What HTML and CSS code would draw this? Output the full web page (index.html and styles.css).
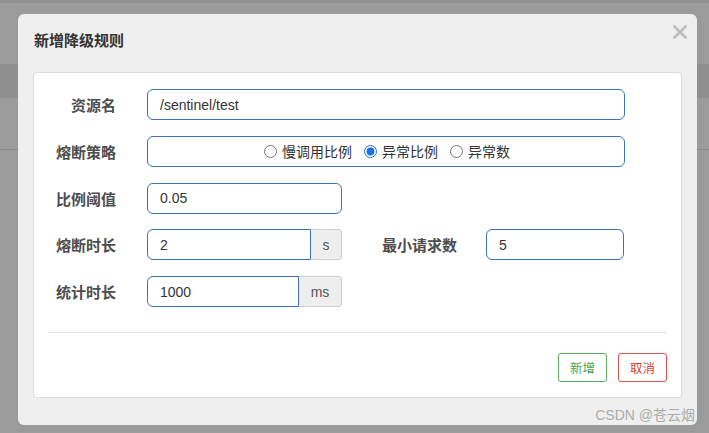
FILE: index.html
```html
<!DOCTYPE html>
<html lang="zh">
<head>
<meta charset="utf-8">
<title>新增降级规则</title>
<link rel="stylesheet" href="styles.css">
</head>
<body>
<div class="page">
  <div class="bg-top"></div>
  <div class="bg-band"></div>
  <div class="bg-line"></div>
</div>

<div class="modal">
  <div class="modal-header">
    <h4 class="modal-title">新增降级规则</h4>
    <span class="close">
      <svg width="14" height="14" viewBox="0 0 14 14"><path d="M1.5 1.5 L12.5 12.5 M12.5 1.5 L1.5 12.5" stroke="#bdbdbd" stroke-width="2.6" stroke-linecap="round"/></svg>
    </span>
  </div>
  <div class="card">
    <div class="form">
      <div class="row">
        <label class="label">资源名</label>
        <div class="control w-full"><input class="input" type="text" value="/sentinel/test"></div>
      </div>
      <div class="row">
        <label class="label">熔断策略</label>
        <div class="control w-full radio-box">
          <label class="radio"><input type="radio" name="grade"><span>慢调用比例</span></label>
          <label class="radio"><input type="radio" name="grade" checked><span>异常比例</span></label>
          <label class="radio"><input type="radio" name="grade"><span>异常数</span></label>
        </div>
      </div>
      <div class="row">
        <label class="label">比例阈值</label>
        <div class="control w-small"><input class="input" type="text" value="0.05"></div>
      </div>
      <div class="row">
        <label class="label">熔断时长</label>
        <div class="control w-small group">
          <input class="input grp-input" type="text" value="2">
          <span class="addon addon-s">s</span>
        </div>
        <label class="label label-wide">最小请求数</label>
        <div class="control w-min"><input class="input" type="text" value="5"></div>
      </div>
      <div class="row">
        <label class="label">统计时长</label>
        <div class="control w-small group">
          <input class="input grp-input" type="text" value="1000">
          <span class="addon addon-ms">ms</span>
        </div>
      </div>
    </div>
    <div class="divider"></div>
    <div class="actions">
      <button class="btn btn-add">新增</button>
      <button class="btn btn-cancel">取消</button>
    </div>
  </div>
  <div class="watermark">CSDN @苍云烟</div>
</div>
</body>
</html>
```

FILE: styles.css
```css
* { box-sizing: border-box; }

html, body {
  margin: 0;
  padding: 0;
}

body {
  width: 709px;
  height: 433px;
  overflow: hidden;
  background: #9b9b9b;
  position: relative;
  font-family: "Liberation Sans", "Noto Sans CJK SC", sans-serif;
}

.page {
  display: flex;
  flex-direction: column;
}

.bg-top {
  height: 3px;
  background: #909090;
}

.bg-band {
  margin-top: 61px;
  height: 34px;
  background: #8f8f8f;
}

.bg-line {
  margin-top: 51px;
  height: 1px;
  background: #878787;
}

.modal {
  position: absolute;
  left: 18px;
  top: 14px;
  width: 679px;
  height: 411px;
  background: #efefef;
  border-radius: 6px;
}

.modal-header {
  height: 58px;
  padding: 17px 16px 0 16px;
  position: relative;
}

.modal-title {
  margin: 0;
  font-size: 15px;
  line-height: 20px;
  font-weight: bold;
  color: #333;
}

.close {
  position: absolute;
  right: 10px;
  top: 11px;
  display: block;
  width: 14px;
  height: 14px;
}

.close svg { display: block; }

.card {
  margin: 0 15px;
  height: 326px;
  background: #fff;
  border: 1px solid #dcdcdc;
  border-radius: 4px;
  padding: 16px 14px 0 14px;
}

.form {
  display: flex;
  flex-direction: column;
  gap: 15.75px;
}

.row {
  display: flex;
  align-items: center;
  height: 31px;
}

.label {
  width: 68px;
  margin-right: 31px;
  text-align: right;
  font-size: 15px;
  font-weight: bold;
  color: #4d4d4d;
  white-space: nowrap;
}

.label-wide {
  width: 115px;
  margin-right: 29px;
}

.control {
  height: 31px;
}

.w-full { width: 478px; }
.w-small { width: 195px; }
.w-min { width: 138px; }

.input {
  width: 100%;
  height: 31px;
  margin: 0;
  border: 1px solid #3d72b4;
  border-radius: 6px;
  padding: 0 12px;
  font-family: "Liberation Sans", "Noto Sans CJK SC", sans-serif;
  font-size: 14px;
  color: #333;
  background: #fff;
  outline: none;
}

.radio-box {
  border: 1px solid #3d72b4;
  border-radius: 6px;
  display: flex;
  align-items: center;
  justify-content: center;
  gap: 12px;
  padding-left: 2px;
}

.radio {
  display: flex;
  align-items: center;
  font-size: 14px;
  color: #333;
}

.radio input {
  margin: 0 5px 0 0;
  width: 13px;
  height: 13px;
  accent-color: #1f6fe5;
}

.group {
  display: flex;
}

.grp-input {
  flex: 1;
  min-width: 0;
  border-radius: 6px 0 0 6px;
}

.addon {
  display: flex;
  align-items: center;
  justify-content: center;
  height: 31px;
  background: #eee;
  border: 1px solid #ccc;
  border-left: none;
  border-radius: 0 4px 4px 0;
  font-size: 14px;
  color: #555;
}

.addon-s { width: 31px; }
.addon-ms { width: 43px; }

.divider {
  margin-top: 25px;
  height: 1px;
  background: #e3e3e3;
}

.actions {
  display: flex;
  justify-content: flex-end;
  gap: 11px;
  margin-top: 20px;
}

.btn {
  width: 49px;
  height: 29px;
  padding: 0;
  background: #fff;
  border-radius: 3px;
  font-family: "Liberation Sans", "Noto Sans CJK SC", sans-serif;
  font-size: 12.5px;
  cursor: pointer;
}

.btn-add {
  border: 1px solid #5cae5c;
  color: #4aa44a;
}

.btn-cancel {
  border: 1px solid #d9534f;
  color: #d43f3a;
}

.watermark {
  position: absolute;
  right: 2px;
  bottom: 1px;
  font-size: 14px;
  line-height: 18px;
  font-weight: normal;
  color: #ababab;
  white-space: nowrap;
}
```
